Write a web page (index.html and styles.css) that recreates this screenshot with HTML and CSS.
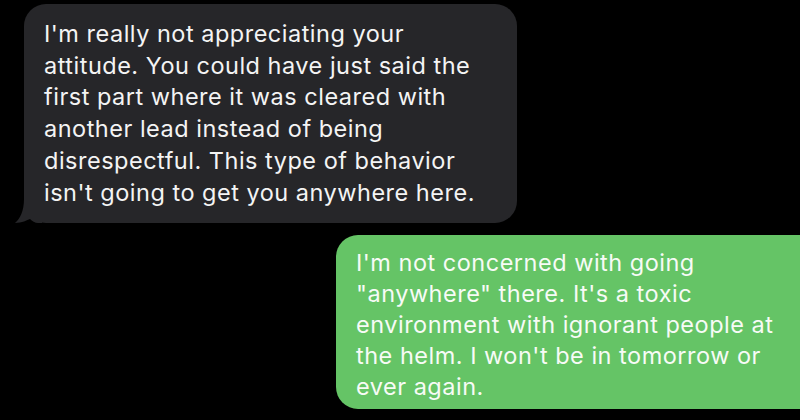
FILE: index.html
```html
<!DOCTYPE html>
<html lang="en">
<head>
  <meta charset="UTF-8">
  <meta name="viewport" content="width=device-width, initial-scale=1.0">
  <title>Messages</title>
  <link rel="stylesheet" href="styles.css">
</head>
<body>

<div class="thread">
  <!-- incoming -->
  <div class="bubble in">
    <p>I'm really not appreciating your attitude. You could have just said the first part where it was cleared with another lead instead of being disrespectful. This type of behavior isn't going to get you anywhere here.</p>
    <svg class="tail" width="30" height="24" viewBox="0 0 30 24">
      <path d="M12,0 C12,12 8,20 3,24 C10,24 15,21 18,20 C20,22 23,24 26,24 L30,24 L30,0 Z" fill="#262629"/>
    </svg>
  </div>

  <!-- outgoing -->
  <div class="bubble out">
    <p>I'm not concerned with going "anywhere" there. It's a toxic environment with ignorant people at the helm. I won't be in tomorrow or ever again.</p>
  </div>
</div>

</body>
</html>
```

FILE: styles.css
```css
body {
  margin: 0;
  background: #000;
  font-family: Inter, "Liberation Sans", Arial, sans-serif;
  overflow: hidden;
}

.thread {
  display: flex;
  flex-direction: column;
  gap: 12px;
  padding-top: 4px;
}

.bubble { position: relative; }
.bubble p {
  margin: 0;
  font-size: 23.5px;
  line-height: 31.7px;
  letter-spacing: 0.5px;
  color: #f4f4f4;
}

/* gray incoming */
.bubble.in {
  background: #262629;
  margin-left: 24px;
  width: 493px;
  box-sizing: border-box;
  padding: 14px 33px 15px 20px;
  border-radius: 22px;
}
.bubble.in .tail { position: absolute; left: -12px; bottom: 0; }

/* green outgoing */
.bubble.out {
  background: #65c466;
  margin-left: 336px;
  box-sizing: border-box;
  padding: 12px 19px 7px 20px;
  border-radius: 22px 0 0 22px;
}
.bubble.out p { color: #f7fbf6; line-height: 31px; }
```
